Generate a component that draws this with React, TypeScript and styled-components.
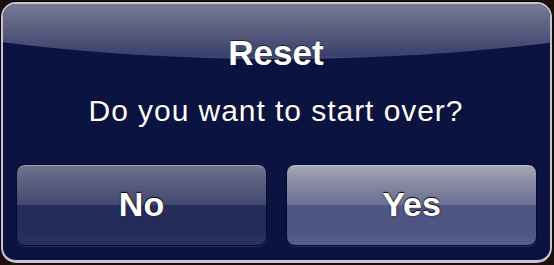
import * as React from 'react';
import styled, { createGlobalStyle } from 'styled-components';

const GlobalStyle = createGlobalStyle`
	html, body {
		margin: 0;
		padding: 0;
		background: #1c0f0c;
	}
	body {
		font-family: "Liberation Sans", Arial, Helvetica, sans-serif;
	}
`;

const Dialog = styled.div`
	position: relative;
	box-sizing: border-box;
	width: 551px;
	height: 261px;
	margin: 2px 0 0 1px;
	padding: 29px 14px 14px 13px;
	display: flex;
	flex-direction: column;
	align-items: stretch;
	border: 2px solid #c6c4d0;
	border-bottom-width: 3px;
	border-radius: 15px;
	background: #0b1340;
	overflow: hidden;
	box-shadow: 0 0 0 1px rgba(0, 0, 0, 0.6);

	/* glossy highlight over the top of the alert */
	&::before {
		content: '';
		position: absolute;
		left: -325px;
		top: -245px;
		width: 1200px;
		height: 300px;
		border-radius: 50%;
		background: linear-gradient(180deg, #8a8da4 0%, #7d8099 80%, #5a5e80 90%, #3a406a 99%, #4a507a 100%);
		pointer-events: none;
	}
`;

const Title = styled.h1`
	position: relative;
	margin: 0;
	font-size: 35px;
	line-height: 40px;
	font-weight: bold;
	color: #ffffff;
	text-align: center;
	text-shadow: 0 -1px 0 rgba(0, 0, 0, 0.55);
`;

const Message = styled.p`
	position: relative;
	margin: 20px 0 0;
	font-size: 30px;
	line-height: 36px;
	letter-spacing: 0.95px;
	color: #ffffff;
	text-align: center;
	text-shadow: 0 -1px 0 rgba(0, 0, 0, 0.55);
`;

const ButtonRow = styled.div`
	position: relative;
	margin-top: auto;
	display: grid;
	grid-template-columns: 251px 251px;
	column-gap: 19px;
`;

const Button = styled.button<{ $primary?: boolean }>`
	box-sizing: border-box;
	height: 82px;
	border-radius: 9px;
	border: 1px solid #070b28;
	font-family: "Liberation Sans", Arial, Helvetica, sans-serif;
	font-size: 34px;
	font-weight: bold;
	color: #ffffff;
	text-shadow: 0 -1px 1px rgba(0, 0, 0, 0.9), 0 0 2px rgba(0, 0, 0, 0.6);
	padding: 0 0 2px;
	background: ${p =>
		p.$primary
			? 'linear-gradient(180deg, #a6a8ba 0%, #8a8ca4 20%, #6d7193 49%, #4f5681 51%, #4d5481 80%, #575e8b 100%)'
			: 'linear-gradient(180deg, #72758f 0%, #5c6080 20%, #444a70 49%, #252d5c 51%, #232b59 80%, #2b3363 100%)'};
	box-shadow: inset 0 1px 0 rgba(255, 255, 255, 0.35), 0 1px 0 rgba(255, 255, 255, 0.12);
	cursor: pointer;
`;

export default function App() {
	return (
		<React.Fragment>
			<GlobalStyle />
			<Dialog>
				<Title>Reset</Title>
				<Message>Do you want to start over?</Message>
				<ButtonRow>
					<Button>No</Button>
					<Button $primary>Yes</Button>
				</ButtonRow>
			</Dialog>
		</React.Fragment>
	);
}
